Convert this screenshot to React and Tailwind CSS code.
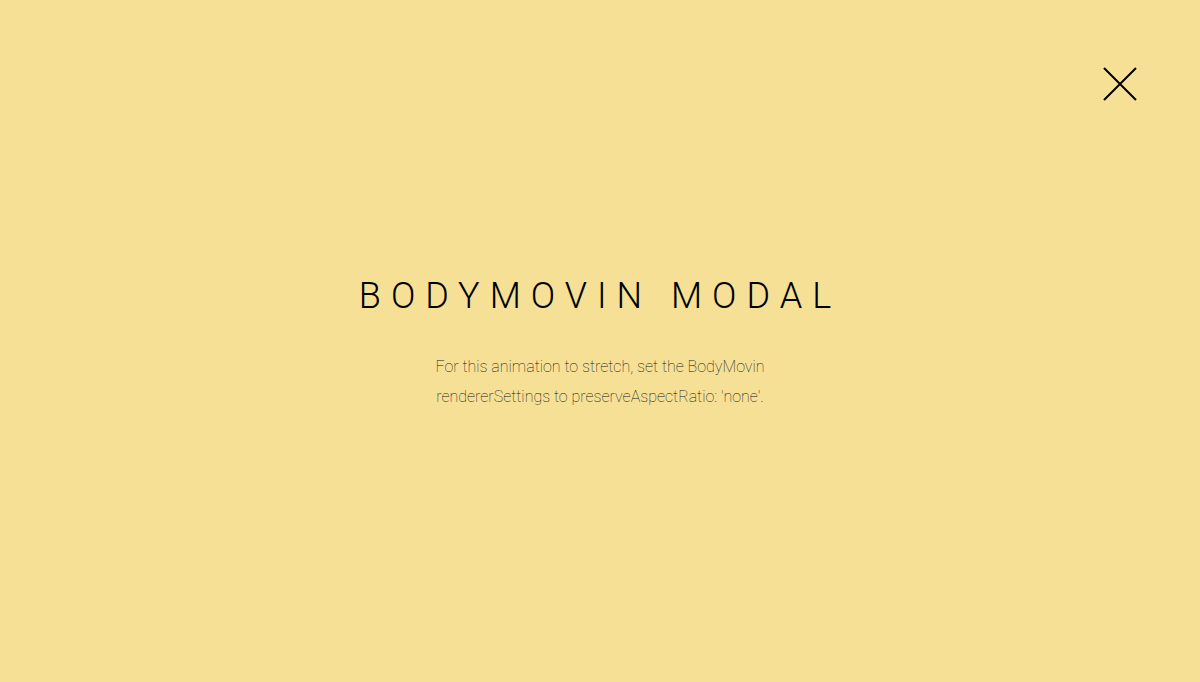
import React from 'react';

const App = () => {
  return (
    <div
      className="relative flex h-[682px] w-full flex-col items-center bg-[#f5e096] text-black"
      style={{ fontFamily: 'Roboto, "Liberation Sans", sans-serif' }}
    >
      {/* Close */}
      <button className="absolute right-[63px] top-[67px] h-[34px] w-[34px]">
        <svg viewBox="0 0 34 34" className="h-full w-full" fill="none" stroke="#000" strokeWidth="2">
          <path d="M1 1 L33 33 M33 1 L1 33" />
        </svg>
      </button>

      <h1 className="mt-[276px] text-[36px] font-light leading-[40px] tracking-[10px]">
        BODYMOVIN MODAL
      </h1>

      <p className="mt-[36px] w-[340px] text-center text-[16px] font-thin leading-[30px] text-[#111]">
        For this animation to stretch, set the BodyMovin rendererSettings to preserveAspectRatio: 'none'.
      </p>
    </div>
  );
};

export default App;
